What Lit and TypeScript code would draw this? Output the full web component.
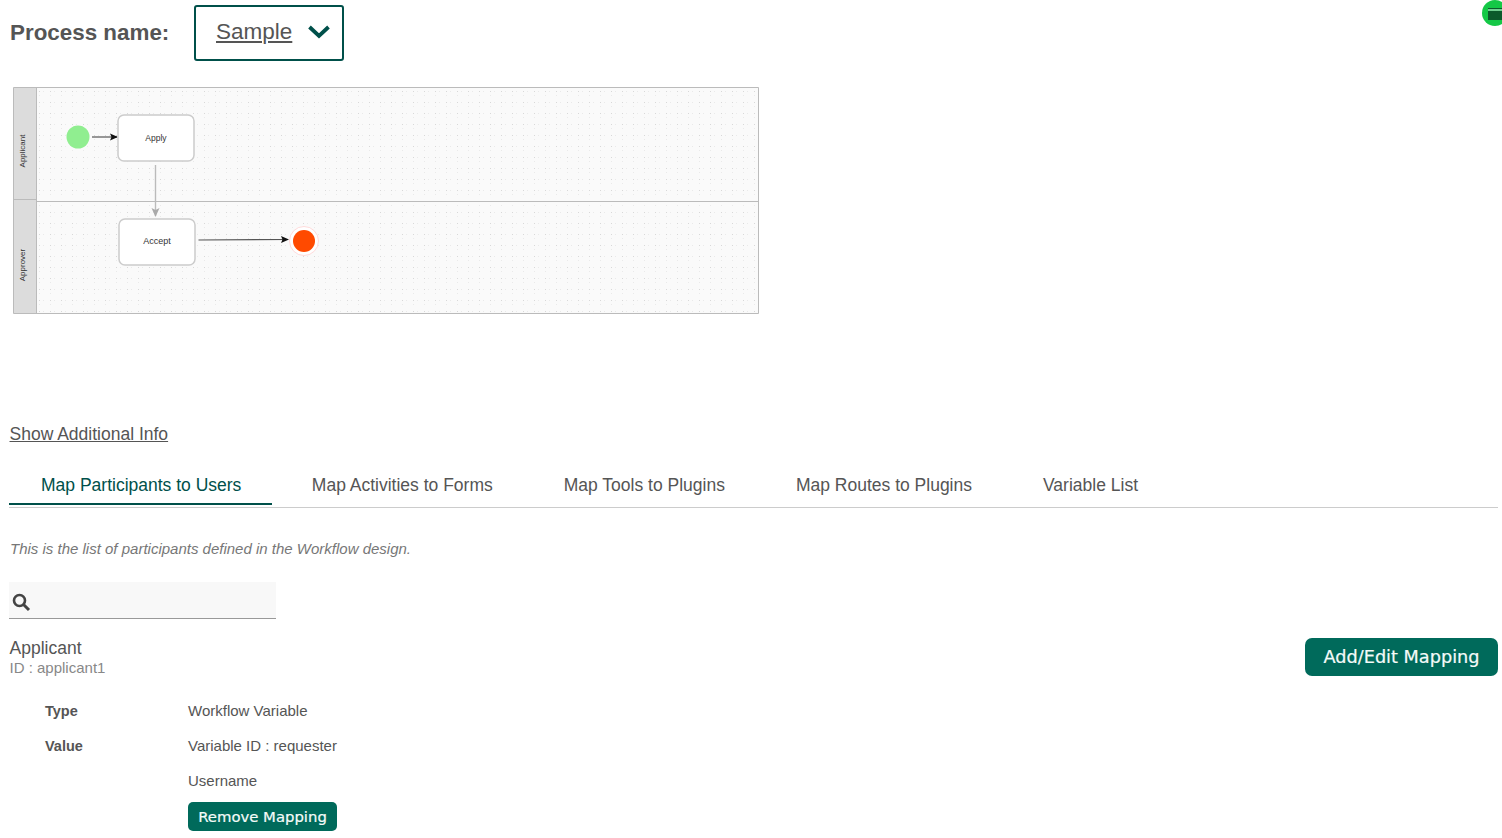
import { LitElement, html, css } from "lit";
import { customElement } from "lit/decorators.js";

@customElement("app-root")
export class AppRoot extends LitElement {
  static styles = css`
    :host {
      display: block;
      height: 838px;
      overflow: hidden;
      position: relative;
      background: #fff;
      color: #555;
      font-family: "Liberation Sans", Arial, sans-serif;
      font-size: 15px;
    }
    .page { padding: 5px 4px 0 9px; display: flex; flex-direction: column; }
    .head { display: flex; align-items: center; height: 56px; }
    .head-label { font-size: 22.4px; font-weight: 700; color: #555; width: 185px; padding-left: 1px; box-sizing: border-box; }
    .select {
      box-sizing: border-box; width: 150px; height: 56px;
      border: 2px solid #00504a; border-radius: 3px;
      display: flex; align-items: center; padding: 0 0 2px 20px; gap: 15px;
      font-size: 22.5px; color: #555; text-decoration: underline;
    }
    .diagram { display: block; margin: 26px 0 0 4px; }
    .more { margin-top: 107px; font-size: 17.5px; line-height: 24px; text-decoration: underline; color: #555; padding-left: 0.5px; height: 24px; }
    .tabs { margin-top: 18px; height: 43px; display: flex; border-bottom: 1px solid #ccc; }
    .tab { box-sizing: border-box; height: 41px; padding: 10.5px 32px 0; margin-right: 7px; font-size: 17.5px; line-height: 20px; white-space: nowrap; color: #555; }
    .tab.active { border-bottom: 2px solid #00504a; color: #00504a; padding-right: 31px; margin-right: 7.5px; }
    .intro { margin-top: 32px; line-height: 18px; font-style: italic; color: #777; padding-left: 1px; }
    .search { margin-top: 24px; width: 267px; height: 37px; background: #f8f8f8; border-bottom: 1px solid #999; display: flex; align-items: center; box-sizing: border-box; padding: 4px 0 0 3px; }
    .row { margin-top: 19px; display: flex; justify-content: space-between; align-items: flex-start; }
    .name { font-size: 17.5px; line-height: 20px; padding-left: 0.5px; color: #555; }
    .id { line-height: 18px; color: #888; padding-left: 0.5px; margin-top: 1px; }
    .btn { background: #006a5b; color: #f5fbf9; font-family: "DejaVu Sans", Verdana, sans-serif; border-radius: 7px; display: flex; align-items: center; justify-content: center; white-space: nowrap; -webkit-text-stroke: 0.2px #f5fbf9; }
    .btn.big { width: 193px; height: 38px; font-size: 17.7px; }
    .btn.small { width: 149px; height: 29px; font-size: 14.85px; border-radius: 5px; }
    .props { margin-top: 25px; display: grid; grid-template-columns: 143px auto; justify-content: start; padding-left: 36px; row-gap: 17px; line-height: 18px; }
    .k { font-weight: 700; color: #555; font-size: 14.5px; }
    .cell-btn { margin-top: -5px; }
    .fab { position: absolute; left: 1482px; top: 0; width: 26px; height: 26px; border-radius: 50%; background: #14c846; }
    .fab i { position: absolute; left: 6px; top: 8px; width: 14px; height: 12px; background: #0b5a2b; }
    .fab i::before { content: ""; position: absolute; left: 0; right: 0; top: 1px; height: 2px; background: #6fcf8f; }
  `;

  private diagram() {
    return html`<svg class="diagram" width="746" height="228" viewBox="0 0 746 228" xmlns="http://www.w3.org/2000/svg">
      <defs>
        <pattern id="dots" width="11" height="11" patternUnits="userSpaceOnUse"><rect x="4" y="4" width="1" height="1" fill="#d8d8d8"/><rect x="4" y="8" width="1" height="1" fill="#eaeaea"/><rect x="8" y="4" width="1" height="1" fill="#eaeaea"/></pattern>
        <marker id="blk" markerWidth="8" markerHeight="8" refX="7" refY="4" orient="auto" markerUnits="userSpaceOnUse"><path d="M0 0.5L8 4L0 7.5L1.5 4Z" fill="#111"/></marker>
        <marker id="gry" markerWidth="9" markerHeight="9" refX="8" refY="4.5" orient="auto" markerUnits="userSpaceOnUse"><path d="M0 0.5L9 4.5L0 8.5L2 4.5Z" fill="#aaa"/></marker>
      </defs>
      <rect x="0.5" y="0.5" width="745" height="226" fill="#fafafa"/>
      <rect x="0.5" y="0.5" width="745" height="226" fill="url(#dots)"/>
      <rect x="1" y="1" width="22" height="225" fill="#dcdcdc"/>
      <path d="M0.5 0.5H745.5V226.5H0.5Z M23.5 0.5V226.5" fill="none" stroke="#bbb"/>
      <path d="M0.5 112.5H23.5M23.5 114.5H745.5" fill="none" stroke="#bbb"/>
      <text transform="translate(12 64) rotate(-90)" text-anchor="middle" font-size="8" fill="#333" font-family="Liberation Sans">Applicant</text>
      <text transform="translate(12 178) rotate(-90)" text-anchor="middle" font-size="8" fill="#333" font-family="Liberation Sans">Approver</text>
      <circle cx="65" cy="50" r="11.5" fill="#90ee90"/>
      <path d="M79 50H104" stroke="#555" stroke-width="1.2" marker-end="url(#blk)"/>
      <rect x="105" y="28" width="76" height="46" rx="6" fill="#fff" stroke="#ccc" stroke-width="1.5"/>
      <text x="143" y="54" text-anchor="middle" font-size="8.5" fill="#333" font-family="Liberation Sans">Apply</text>
      <path d="M142.5 78V129" stroke="#bbb" stroke-width="1.4" marker-end="url(#gry)"/>
      <rect x="106" y="132" width="76" height="46" rx="6" fill="#fff" stroke="#ccc" stroke-width="1.5"/>
      <text x="144" y="157" text-anchor="middle" font-size="9" fill="#333" font-family="Liberation Sans">Accept</text>
      <path d="M185.5 153L275 152.5" stroke="#555" stroke-width="1.2" marker-end="url(#blk)"/>
      <circle cx="291" cy="154" r="14.5" fill="#fff" stroke="#fcc" stroke-width="0.7"/>
      <circle cx="291" cy="154" r="11" fill="#ff4a00"/>
    </svg>`;
  }

  render() {
    return html`<div class="page">
        <div class="head">
          <div class="head-label">Process name:</div>
          <div class="select">Sample
            <svg width="24" height="16" viewBox="0 0 24 16"><path d="M2.5 3L12 12L21.5 3" fill="none" stroke="#00504a" stroke-width="3.8"/></svg>
          </div>
        </div>
        ${this.diagram()}
        <div class="more">Show Additional Info</div>
        <div class="tabs">
          <div class="tab active">Map Participants to Users</div>
          <div class="tab">Map Activities to Forms</div>
          <div class="tab">Map Tools to Plugins</div>
          <div class="tab">Map Routes to Plugins</div>
          <div class="tab">Variable List</div>
        </div>
        <div class="intro">This is the list of participants defined in the Workflow design.</div>
        <div class="search">
          <svg width="19" height="19" viewBox="0 0 19 19"><circle cx="7.5" cy="7.5" r="5.5" fill="none" stroke="#444" stroke-width="2.6"/><path d="M11.5 11.5L17 17" stroke="#444" stroke-width="3"/></svg>
        </div>
        <div class="row">
          <div>
            <div class="name">Applicant</div>
            <div class="id">ID : applicant1</div>
          </div>
          <div class="btn big">Add/Edit Mapping</div>
        </div>
        <div class="props">
          <div class="k">Type</div><div>Workflow Variable</div>
          <div class="k">Value</div><div>Variable ID : requester</div>
          <div></div><div>Username</div>
          <div></div><div class="cell-btn"><div class="btn small">Remove Mapping</div></div>
        </div>
      </div>
      <div class="fab"><i></i></div>`;
  }
}
